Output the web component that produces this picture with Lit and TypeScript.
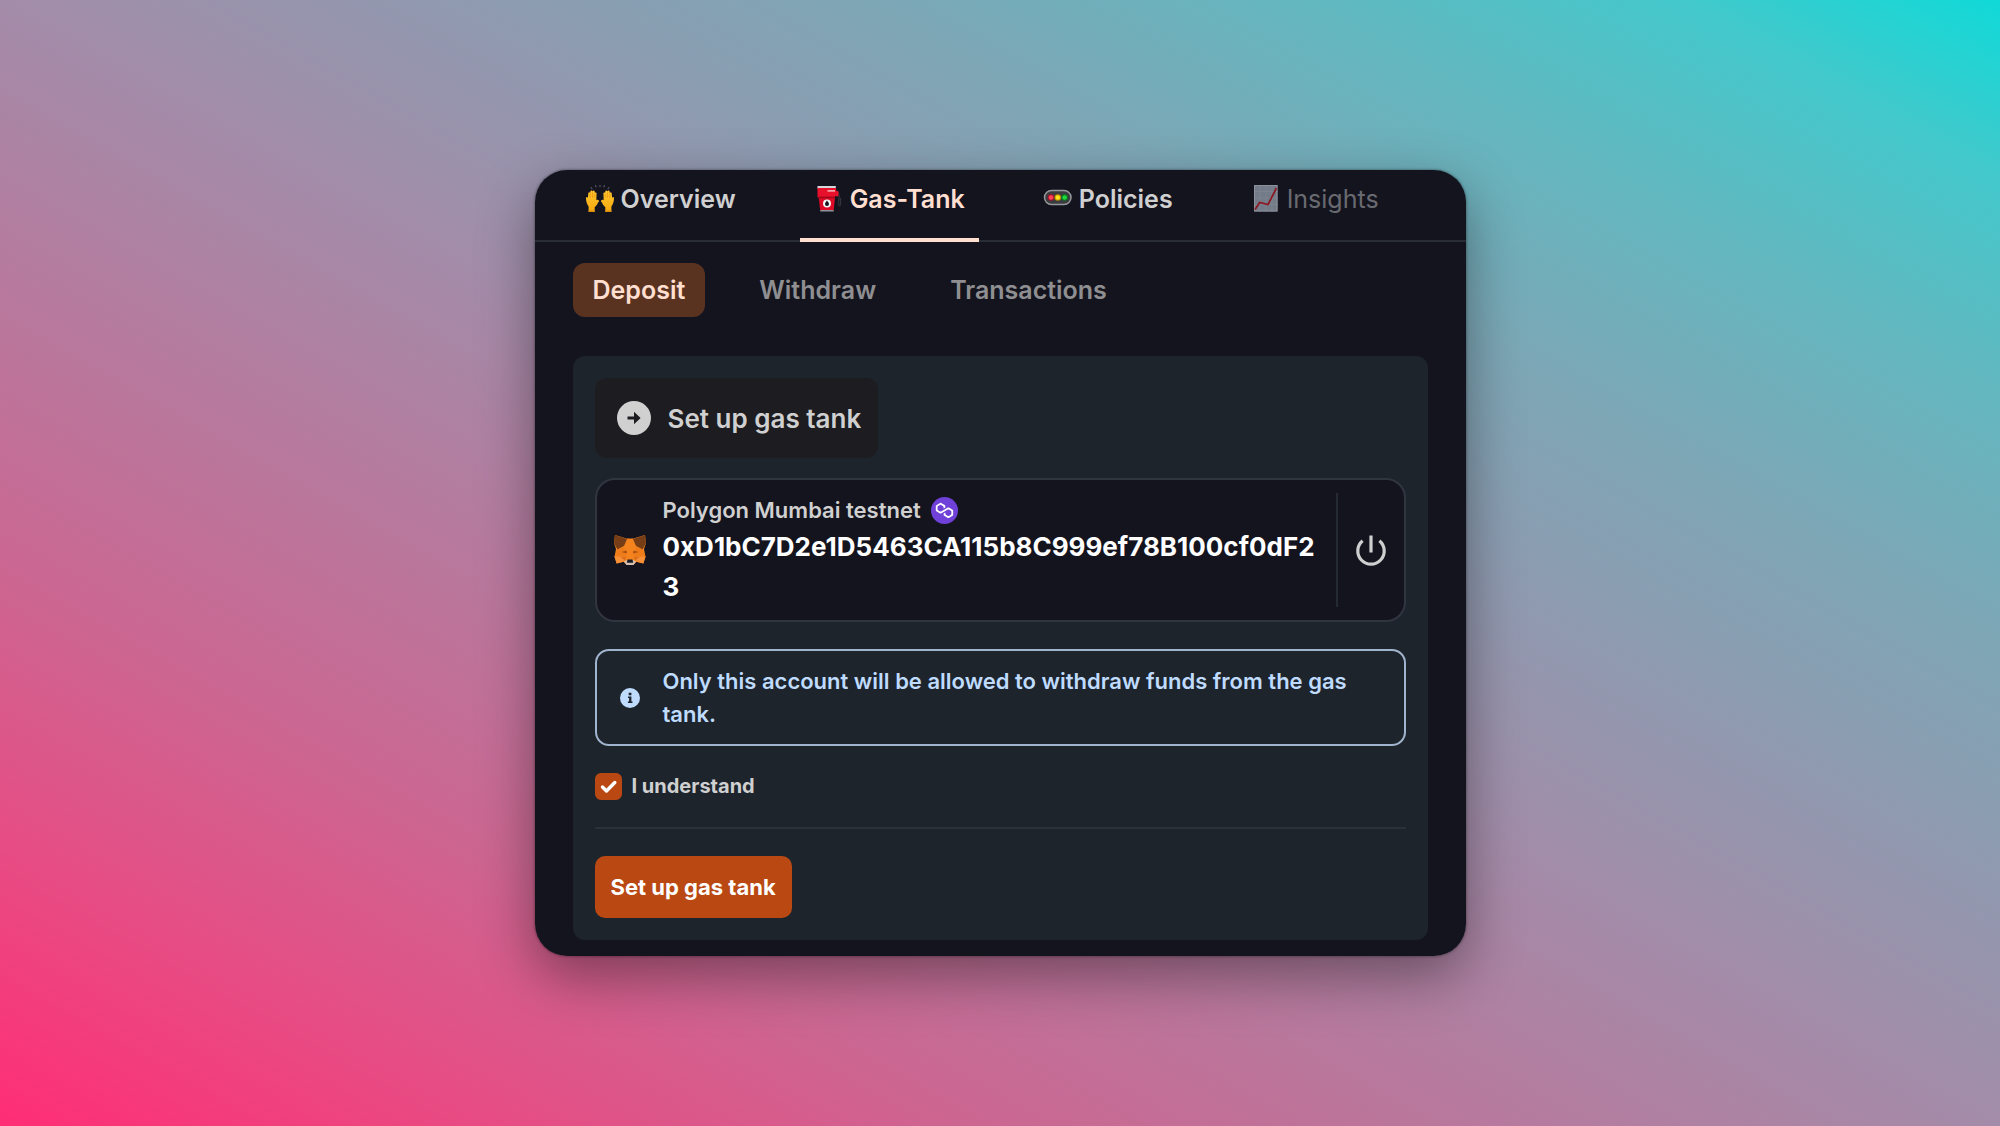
import { LitElement, html, svg, css, nothing } from "lit";
import { customElement, state } from "lit/decorators.js";
import { classMap } from "lit/directives/class-map.js";

const raisedHands = html`<svg viewBox="0 0 30 30" aria-hidden="true">
  <defs>
    <linearGradient id="skin" x1="0" y1="0" x2="0" y2="1">
      <stop offset="0" stop-color="#ffc52e" /><stop offset="1" stop-color="#f5a80f" />
    </linearGradient>
  </defs>
  <g stroke="#55565c" stroke-width="1.3" stroke-linecap="round">
    <path d="M7 4.600l-.8-1M11 2.800l-.4-1.200M15 2.600V1.400M19 2.800l.4-1.200M23 4.600l.8-1" />
  </g>
  <g fill="url(#skin)">
    <path id="hand" d="M3.6 28V22.6C2 20.4 1 17.400 1 14.200C1 12.800 2.600 12.600 2.900 13.900L3.300 9.200C3.400 7.800 5.100 7.900 5.100 9.200L5.400 7.300C5.600 6 7.400 6.100 7.400 7.500L7.700 7.100C8.200 6.100 9.700 6.400 9.700 7.700L10 8.800C10.500 8 11.700 8.500 11.600 9.600L11.300 16.300C12 15.500 13.300 15.800 14 16.700C14.500 17.500 13.300 17.900 12.800 18.900C12.100 20.600 11.200 22 9.700 22.900V28Z" />
    <use href="#hand" transform="matrix(-1 0 0 1 30 0)" />
  </g>
  <path d="M5.200 9.500v4M7.500 8.500v5M9.700 9.500v4M24.800 9.500v4M22.500 8.500v5M20.300 9.500v4" stroke="#dd8a0b" stroke-width=".6" fill="none" />
  <path d="M3.600 26.500h6.100V28H3.600zM20.300 26.500h6.100V28h-6.100z" fill="#d98b10" />
</svg>`;

const fuelPump = html`<svg viewBox="0 0 30 30" aria-hidden="true">
  <path d="M22.500 7.500l2.600 3c.6 3-.8 5.500-.6 9 .1 2.600 2 3 2 .400V14" fill="none" stroke="#33343c" stroke-width="1.200" />
  <path d="M3.500 2h18.300v3H3.500z" fill="#d5d7da" />
  <path d="M3.500 4h18.600v2.500l2.600 1.300-.500 5-3-1v1.700H3.500z" fill="#e8112b" />
  <path d="M13.500 6h7.500v1.700h-7.500z" fill="#f3a3a8" />
  <path d="M4.600 12.800h16.500l-1.500 14H6.300z" fill="#dd0b26" />
  <path d="M4.600 12.800h16.500l-.200 1.400H4.800z" fill="#9c0719" />
  <path d="M6.300 26h13.300v1.400H6.300z" fill="#8f949b" />
  <circle cx="13" cy="19.500" r="4" fill="#f4f4f4" />
  <path d="M13 16.400c1.300 1.700 2 2.600 2 3.700a2 2 0 0 1-4 0c0-1.100.700-2 2-3.700z" fill="#14141f" />
</svg>`;

const trafficLight = html`<svg viewBox="0 0 30 30" aria-hidden="true">
  <rect x="1.500" y="6.500" width="26.500" height="14" rx="7" fill="#3b3c3f" stroke="#96979a" stroke-width="1.500" />
  <circle cx="8" cy="13.500" r="3.300" fill="#a80f25" /><circle cx="8" cy="13.500" r="2.300" fill="#ff4557" />
  <circle cx="14.800" cy="13.500" r="3.300" fill="#b98d00" /><circle cx="14.800" cy="13.500" r="2.300" fill="#ffe11c" />
  <circle cx="21.600" cy="13.500" r="3.300" fill="#067c1c" /><circle cx="21.600" cy="13.500" r="2.300" fill="#1fd63c" />
</svg>`;

const chart = html`<svg viewBox="0 0 30 30" aria-hidden="true">
  <rect x="3" y="1" width="23.500" height="26.500" fill="#747b88" />
  <path d="M3.500 7.500h23M3.500 14h23M3.500 20.500h23M9 1.500v26M15 1.500v26M21 1.500v26" stroke="#7d8592" stroke-width=".8" />
  <rect x="3.500" y="1.500" width="22.500" height="25.500" fill="none" stroke="#8b909b" />
  <path d="M4 25.500l4.700-7 8.300 2L25.500 4" fill="none" stroke="#8c1622" stroke-width="1.700" />
</svg>`;

const arrowCircle = html`<svg class="arrow" viewBox="0 0 34 34" aria-hidden="true">
  <circle cx="17" cy="17" r="17" fill="#d0d0d0" />
  <path d="M10.500 17h8" stroke="#1d1c20" stroke-width="3" />
  <path d="M17 10.800l6.600 6.200L17 23.200z" fill="#1d1c20" />
</svg>`;

const fox = html`<svg class="fox" viewBox="0 0 32 32" aria-hidden="true">
  <path d="M1 1l11.500 3.500h7L31 1l1 8-2 6 1.500 8-2.200 6.500-6.800-1.800-3 3h-7l-3-3-6.800 1.800L.5 23 2 15 0 9z" fill="#f5841f" />
  <path d="M1 1l12 4-3 7-6.500 3.500L0 9zM31 1L19 5l3 7 6.500 3.500L32 9z" fill="#763d16" />
  <path d="M3.500 15.500L10 12l2.500 11L.5 22.500zM28.500 15.500L22 12l-2.500 11 12-.500z" fill="#ee7c1b" />
  <path d="M.5 22.500L11 23l-1.500 4.700-6.800 1.800zM31.500 22.500L21 23l1.500 4.700 6.800 1.800z" fill="#f68f35" />
  <path d="M7.500 18l5-1.500.500 3zM24.500 18l-5-1.500-.500 3z" fill="#a84e12" />
  <path d="M6.500 23l6 .500-2 2.500zM25.500 23l-6 .500 2 2.500z" fill="#d5691a" />
  <path d="M10 27.500l3-1.500h6l3 1.500-2.500 3.500h-7z" fill="#d5bfb2" />
  <path d="M13.500 25.500h5l.700 3.300h-6.400z" fill="#191a22" />
</svg>`;

const polygon = html`<svg class="polygon" viewBox="0 0 27 27" role="img" aria-label="Polygon">
  <circle cx="13.500" cy="13.500" r="13.500" fill="#6f41d8" />
  <path transform="translate(4.800 5.900) scale(.453)" fill="#fff" d="M29,10.2c-0.7-0.4-1.6-0.4-2.4,0L21,13.5l-3.8,2.1l-5.5,3.3c-0.7,0.4-1.6,0.4-2.4,0L5,16.3c-0.7-0.4-1.2-1.2-1.2-2.1v-5c0-0.8,0.4-1.6,1.2-2.1l4.3-2.5c0.7-0.4,1.6-0.4,2.4,0L16,7.2c0.7,0.4,1.2,1.2,1.2,2.1v3.3l3.8-2.2V7c0-0.8-0.4-1.6-1.2-2.1l-8-4.7c-0.7-0.4-1.6-0.4-2.4,0L1.2,5C0.4,5.4,0,6.2,0,7v9.4c0,0.8,0.4,1.6,1.2,2.1l8.1,4.7c0.7,0.4,1.6,0.4,2.4,0l5.5-3.2l3.8-2.2l5.5-3.2c0.7-0.4,1.6-0.4,2.4,0l4.3,2.5c0.7,0.4,1.2,1.2,1.2,2.1v5c0,0.8-0.4,1.6-1.2,2.1L29,28.8c-0.7,0.4-1.6,0.4-2.4,0l-4.3-2.5c-0.7-0.4-1.2-1.2-1.2-2.1V21l-3.8,2.2v3.3c0,0.8,0.4,1.6,1.2,2.1l8.1,4.7c0.7,0.4,1.6,0.4,2.4,0l8.1-4.7c0.7-0.4,1.2-1.2,1.2-2.1V17c0-0.8-0.4-1.6-1.2-2.1L29,10.2z" />
</svg>`;

const power = html`<svg class="power-icon" viewBox="0 0 32 32" aria-hidden="true">
  <path d="M7.600 6.800a13.200 13.200 0 1 0 16.800 0M16 1.500v17" fill="none" stroke="#cfcfd0" stroke-width="3.200" />
</svg>`;

const info = html`<svg class="info-icon" viewBox="0 0 20 20" aria-hidden="true">
  <circle cx="10" cy="10" r="10" fill="#bfdbfe" />
  <path d="M8.700 4.700h2.700v2.500H8.700zM8 8.500h3.400v4.900h1.100v1.500H7.900v-1.500h1.200v-3.400H8z" fill="#1d242c" />
</svg>`;

const tabs = [
  { label: "Overview", icon: raisedHands, disabled: false },
  { label: "Gas-Tank", icon: fuelPump, disabled: false },
  { label: "Policies", icon: trafficLight, disabled: false },
  { label: "Insights", icon: chart, disabled: true },
];
const sections = ["Deposit", "Withdraw", "Transactions"];

@customElement("app-root")
export class AppRoot extends LitElement {
  static styles = css`
    :host {
      display: flex;
      align-items: center;
      justify-content: center;
      box-sizing: border-box;
      min-height: 100vh;
      padding: 32px;
      background: linear-gradient(
        to top right,
        #ff2d75,
        #e84b83 12%,
        #cb6792 25%,
        #a38ca9 50%,
        #7da7b6 72%,
        #62b8c0 83%,
        #43c8cb 92%,
        #10dad8
      );
      color: #d0d0d0;
      font-family: Inter, "Liberation Sans", sans-serif;
    }
    * { box-sizing: border-box; }
    button { font: inherit; color: inherit; background: none; border: 0; margin: 0; cursor: pointer; }
    svg { display: block; flex: none; }
    p { margin: 0; }

    .frame {
      width: 100%;
      max-width: 931px;
      border-radius: 32px;
      box-shadow: 0 20px 56px rgba(0, 0, 0, 0.4), 0 0 3px rgba(0, 0, 0, 0.5);
    }
    .card {
      overflow: hidden;
      border-radius: 32px;
      background: #14141f;
    }
    .tabs {
      display: flex;
      gap: 50px;
      padding-left: 36px;
      border-bottom: 2px solid #272c35;
    }
    .tab {
      display: flex;
      align-items: center;
      gap: 6px;
      margin-bottom: -2px;
      padding: 11px 14px 21px;
      border-bottom: 4px solid transparent;
      font-size: 25px;
      font-weight: 600;
      line-height: 36px;
    }
    .tab svg { width: 30px; height: 30px; }
    .tab.active { color: #ffdfd0; border-color: #ffdfd0; }
    .tab:disabled { color: #696a70; font-weight: 400; cursor: default; }

    .body { padding: 21px 38px 16px; }
    .sections { display: flex; gap: 34px; margin-bottom: 39px; }
    .section {
      padding: 0 20px;
      border-radius: 12px;
      color: #8f8f91;
      font-size: 25px;
      font-weight: 600;
      line-height: 54px;
    }
    .section.active { background: #5a3320; color: #ffdfd0; }

    .panel {
      display: flex;
      flex-direction: column;
      align-items: flex-start;
      gap: 27px;
      padding: 22px;
      border-radius: 12px;
      background: #1d242c;
    }
    .lead { display: flex; flex-direction: column; align-items: flex-start; gap: 20px; width: 100%; }
    .step {
      display: flex;
      align-items: center;
      gap: 17px;
      height: 80px;
      padding: 0 17px 0 22px;
      border-radius: 12px;
      background: #1d1c20;
      font-size: 26px;
      font-weight: 600;
    }
    h2 { margin: 0; font: inherit; }
    .arrow { width: 34px; height: 34px; }

    .account {
      display: flex;
      align-items: center;
      width: 100%;
      padding: 13px 0 13px 17px;
      border: 2px solid #30353f;
      border-radius: 20px;
      background: #14141f;
    }
    .fox { width: 32px; height: 32px; }
    .details { flex: 1; min-width: 0; margin: 0 16px 0 17px; }
    .network {
      display: flex;
      align-items: center;
      gap: 10px;
      font-size: 22px;
      font-weight: 600;
      line-height: 34px;
    }
    .polygon { width: 27px; height: 27px; }
    .address {
      color: #fff;
      font-size: 26px;
      font-weight: 700;
      line-height: 40px;
      word-break: break-all;
    }
    .power {
      display: flex;
      align-items: center;
      align-self: stretch;
      justify-content: center;
      width: 68px;
      padding: 0;
      border-left: 2px solid #252b33;
    }
    .power-icon { width: 32px; height: 32px; }

    .notice {
      display: flex;
      align-items: center;
      gap: 17px;
      width: 100%;
      padding: 14px 17px 13px;
      border: 2px solid #a0b4cd;
      border-radius: 14px;
      color: #bfdbfe;
      font-size: 22px;
      font-weight: 600;
      line-height: 33px;
    }
    .info-icon { width: 20px; height: 20px; margin: 0 6px; }

    .consent {
      display: flex;
      align-items: center;
      gap: 10px;
      font-size: 20px;
      font-weight: 700;
      line-height: 27px;
      cursor: pointer;
    }
    .box { display: grid; width: 27px; height: 27px; }
    .box > * { grid-area: 1 / 1; width: 27px; height: 27px; }
    .box input {
      appearance: none;
      margin: 0;
      border: 2px solid #ba4813;
      border-radius: 6px;
      cursor: pointer;
    }
    .box input:checked { background: #ba4813; }
    .box svg { pointer-events: none; z-index: 1; }

    .rule { width: 100%; height: 2px; margin: 0; border: 0; background: #2b3039; }
    .submit {
      height: 62px;
      padding: 0 16px;
      border-radius: 10px;
      background: #ba4813;
      color: #fff;
      font-size: 22px;
      font-weight: 700;
    }
  `;

  @state() private tab = "Gas-Tank";
  @state() private section = "Deposit";
  @state() private agreed = true;

  render() {
    return html`
      <div class="frame">
        <main class="card">
          <nav class="tabs" aria-label="Project">
            ${tabs.map(
              (t) => html`<button
                class=${classMap({ tab: true, active: t.label === this.tab })}
                ?disabled=${t.disabled}
                aria-current=${t.label === this.tab ? "page" : nothing}
                @click=${() => (this.tab = t.label)}
              >${t.icon}<span>${t.label}</span></button>`
            )}
          </nav>
          <div class="body">
            <nav class="sections" aria-label="Gas tank">
              ${sections.map(
                (s) => html`<button
                  class=${classMap({ section: true, active: s === this.section })}
                  aria-current=${s === this.section ? "page" : nothing}
                  @click=${() => (this.section = s)}
                >${s}</button>`
              )}
            </nav>
            <section class="panel">
              <div class="lead">
                <div class="step">${arrowCircle}<h2>Set up gas tank</h2></div>
                <div class="account">
                  ${fox}
                  <div class="details">
                    <p class="network">Polygon Mumbai testnet ${polygon}</p>
                    <p class="address">0xD1bC7D2e1D5463CA115b8C999ef78B100cf0dF23</p>
                  </div>
                  <button class="power" aria-label="Disconnect">${power}</button>
                </div>
              </div>
              <div class="notice">
                ${info}
                <p>Only this account will be allowed to withdraw funds from the gas tank.</p>
              </div>
              <label class="consent">
                <span class="box">
                  <input
                    type="checkbox"
                    .checked=${this.agreed}
                    @change=${(e: Event) => (this.agreed = (e.target as HTMLInputElement).checked)}
                  />
                  <svg viewBox="0 0 27 27" aria-hidden="true">
                    ${this.agreed
                      ? svg`<path d="M7.500 14l4 4 8.300-8.500" fill="none" stroke="#fff" stroke-width="3.400" stroke-linecap="round" stroke-linejoin="round" />`
                      : nothing}
                  </svg>
                </span>
                I understand
              </label>
              <hr class="rule" />
              <button class="submit" ?disabled=${!this.agreed}>Set up gas tank</button>
            </section>
          </div>
        </main>
      </div>
    `;
  }
}
